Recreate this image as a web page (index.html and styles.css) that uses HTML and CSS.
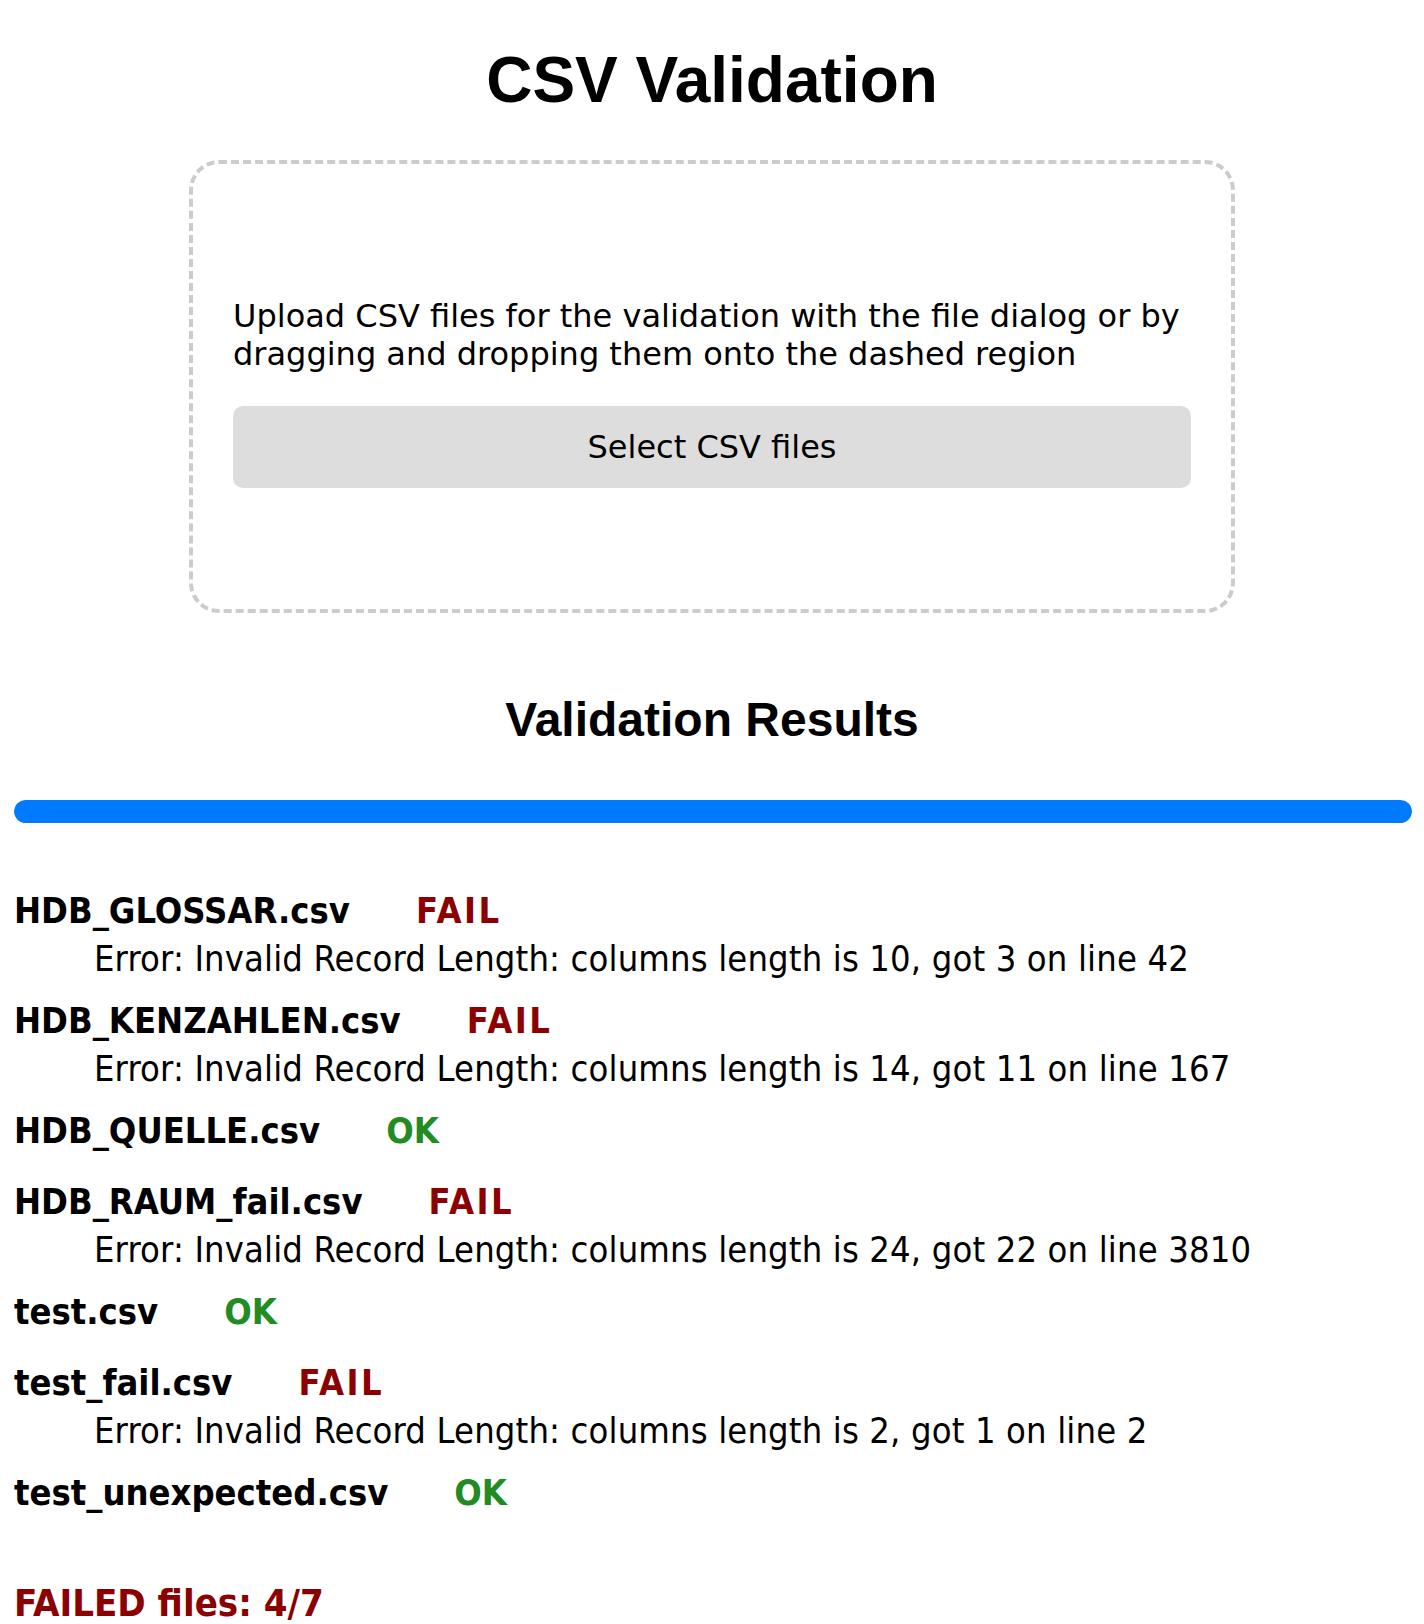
FILE: index.html
```html
<!DOCTYPE html>
<html lang="en">
<head>
<meta charset="utf-8">
<title>CSV Validation</title>
<link rel="stylesheet" href="styles.css">
</head>
<body>
<h1 class="title">CSV Validation</h1>
<div class="dropzone">
  <p class="hint">Upload CSV files for the validation with the file dialog or by dragging and dropping them onto the dashed region</p>
  <button class="select-btn" type="button">Select CSV files</button>
</div>
<h2 class="subtitle">Validation Results</h2>
<div class="progress"><div class="progress-fill" style="width:100%"></div></div>
<div class="results">
  <div class="result">
    <div class="result-head"><span class="name">HDB_GLOSSAR.csv</span><span class="status fail">FAIL</span></div>
    <div class="error">Error: Invalid Record Length: columns length is 10, got 3 on line 42</div>
  </div>
  <div class="result">
    <div class="result-head"><span class="name">HDB_KENZAHLEN.csv</span><span class="status fail">FAIL</span></div>
    <div class="error">Error: Invalid Record Length: columns length is 14, got 11 on line 167</div>
  </div>
  <div class="result">
    <div class="result-head"><span class="name">HDB_QUELLE.csv</span><span class="status ok">OK</span></div>
  </div>
  <div class="result">
    <div class="result-head"><span class="name">HDB_RAUM_fail.csv</span><span class="status fail">FAIL</span></div>
    <div class="error">Error: Invalid Record Length: columns length is 24, got 22 on line 3810</div>
  </div>
  <div class="result">
    <div class="result-head"><span class="name">test.csv</span><span class="status ok">OK</span></div>
  </div>
  <div class="result">
    <div class="result-head"><span class="name">test_fail.csv</span><span class="status fail">FAIL</span></div>
    <div class="error">Error: Invalid Record Length: columns length is 2, got 1 on line 2</div>
  </div>
  <div class="result">
    <div class="result-head"><span class="name">test_unexpected.csv</span><span class="status ok">OK</span></div>
  </div>
</div>
<p class="summary">FAILED files: 4/7</p>
</body>
</html>
```

FILE: styles.css
```css
html, body {
  background: #ffffff;
  color: #000000;
}
body {
  margin: 8px;
  font-family: "DejaVu Sans", Verdana, sans-serif;
  font-size: 32px;
}
.title {
  font-family: "Liberation Sans", Arial, sans-serif;
  font-size: 64px;
  font-weight: bold;
  text-align: center;
  margin: 35px 0 43px;
}
.dropzone {
  width: 958px;
  margin: 0 auto;
  padding: 133px 40px 121px;
  border: 4px dashed #cccccc;
  border-radius: 30px;
  box-sizing: content-box;
}
.hint {
  margin: 0 0 33px;
  line-height: 38px;
}
.select-btn {
  display: block;
  width: 100%;
  padding: 22px 0;
  border: none;
  border-radius: 10px;
  background: #dddddd;
  color: #000000;
  font-family: "DejaVu Sans", Verdana, sans-serif;
  font-size: 32px;
  line-height: 38px;
}
.subtitle {
  font-family: "Liberation Sans", Arial, sans-serif;
  font-size: 48px;
  font-weight: bold;
  text-align: center;
  margin: 79px 0 53px;
  line-height: 55px;
}
.progress {
  margin: 0 4px 0 6px;
  height: 23px;
  border-radius: 12px;
  overflow: hidden;
  background: #e9ecef;
}
.progress-fill {
  height: 100%;
  background: #007bff;
  border-radius: 12px;
}
.results {
  margin-top: 59px;
  padding-left: 6px;
  font-family: "DejaVu Sans Condensed", "DejaVu Sans", sans-serif;
  font-stretch: condensed;
}
.result {
  margin-bottom: 14px;
}
.result-head {
  padding: 9px 0;
  line-height: 39px;
  font-size: 36px;
  font-weight: bold;
}
.status {
  margin-left: 66px;
}
.fail {
  color: #8b0000;
}
.status.fail {
  letter-spacing: 2.5px;
}
.ok {
  color: #228b22;
}
.error {
  padding-left: 80px;
  line-height: 39px;
  font-size: 36px;
  letter-spacing: 0.15px;
}
.summary {
  margin: 63px 0 0 6px;
  line-height: 39px;
  font-family: "DejaVu Sans Condensed", "DejaVu Sans", sans-serif;
  font-stretch: condensed;
  font-size: 38px;
  font-weight: bold;
  color: #8b0000;
}
```
